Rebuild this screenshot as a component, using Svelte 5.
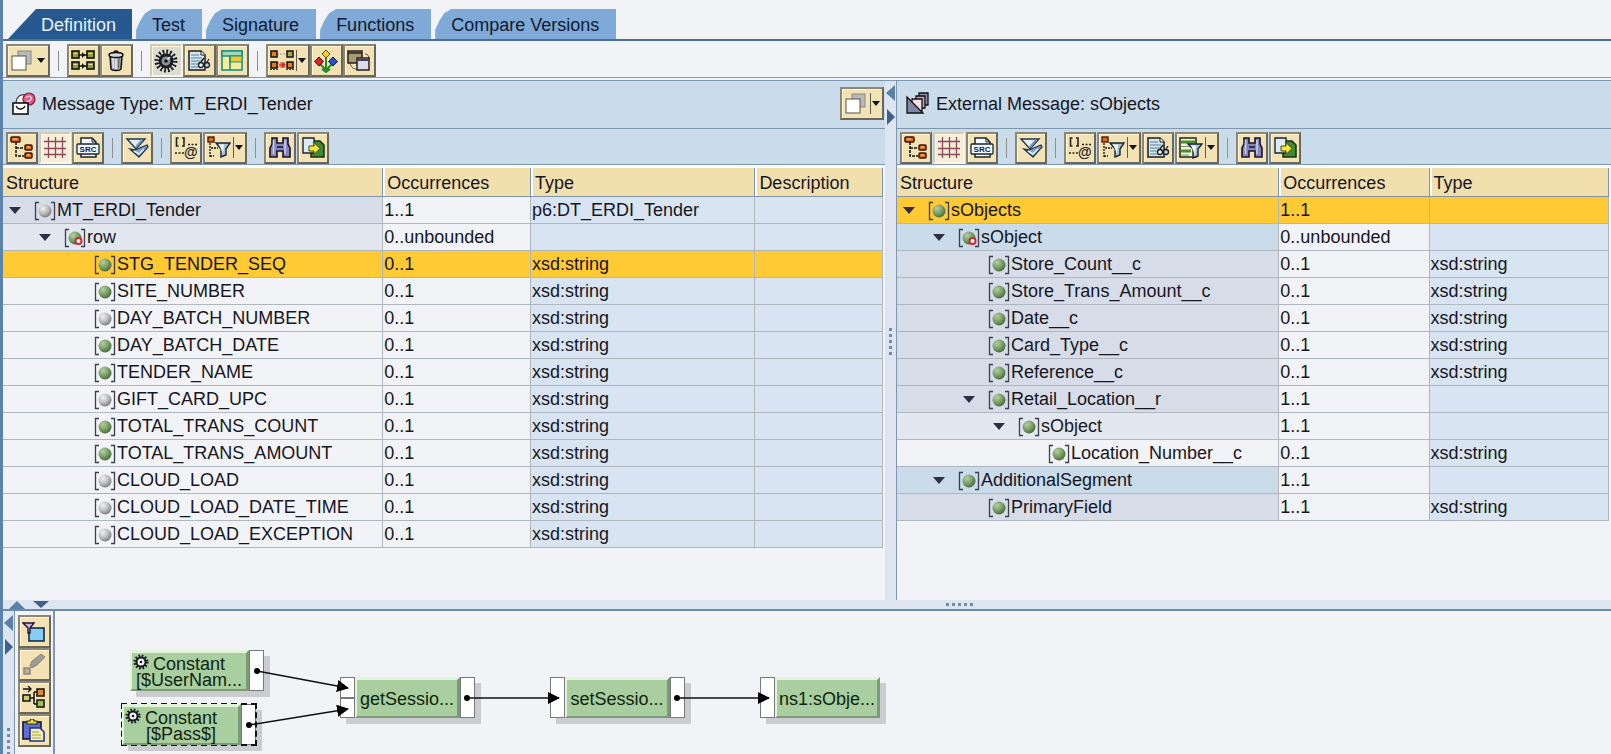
<script>
  const tabs = ['Definition', 'Test', 'Signature', 'Functions', 'Compare Versions'];
  let activeTab = $state('Definition');

  const mainTools = [
    { icon: 'copy', label: 'Object', menu: true },
    null,
    { icon: 'map', label: 'Show mapping' },
    { icon: 'trash', label: 'Delete' },
    null,
    { icon: 'gear', label: 'Parameters', pressed: true },
    { icon: 'docview', label: 'Documentation' },
    { icon: 'layout', label: 'Layout' },
    null,
    { icon: 'mapred', label: 'Map fields', menu: true, bar: true },
    { icon: 'diamonds', label: 'Dependencies' },
    { icon: 'windows', label: 'Windows' }
  ];
  const viewTools = [
    { icon: 'tree', label: 'Tree' },
    { icon: 'grid', label: 'Table', pressed: true },
    { icon: 'src', label: 'Source' },
    null,
    { icon: 'expand', label: 'Expand' },
    null,
    { icon: 'attrs', label: 'Attributes' },
    { icon: 'treefilter', label: 'Filter tree', menu: true, bar: true }
  ];
  const findTools = [null, { icon: 'find', label: 'Find' }, { icon: 'export', label: 'Export' }];
  const leftTools = [...viewTools, ...findTools];
  const rightTools = [
    ...viewTools,
    { icon: 'docview', label: 'Documentation' },
    { icon: 'sheetfilter', label: 'Filter', menu: true, bar: true },
    ...findTools
  ];
  const sideTools = [
    { icon: 'filterwin', label: 'Filter window' },
    { icon: 'brush', label: 'Clear' },
    { icon: 'arrange', label: 'Arrange' },
    { icon: 'paste', label: 'Paste' }
  ];

  const leaf = (name, ball = 'green', extra = {}) => ({
    depth: 2, name, ball, occ: '0..1', type: 'xsd:string', tone: 'plain', ...extra
  });
  const source = [
    { depth: 0, name: 'MT_ERDI_Tender', ball: 'grey', open: true, occ: '1..1', type: 'p6:DT_ERDI_Tender', tone: 'mid' },
    { depth: 1, name: 'row', ball: 'green', multi: true, open: true, occ: '0..unbounded', type: '', tone: 'soft' },
    leaf('STG_TENDER_SEQ', 'green', { selected: true }),
    leaf('SITE_NUMBER'),
    leaf('DAY_BATCH_NUMBER', 'grey'),
    leaf('DAY_BATCH_DATE'),
    leaf('TENDER_NAME'),
    leaf('GIFT_CARD_UPC', 'grey'),
    leaf('TOTAL_TRANS_COUNT'),
    leaf('TOTAL_TRANS_AMOUNT'),
    leaf('CLOUD_LOAD', 'grey'),
    leaf('CLOUD_LOAD_DATE_TIME', 'grey'),
    leaf('CLOUD_LOAD_EXCEPTION', 'grey')
  ];
  const mid = { tone: 'mid' };
  const target = [
    { depth: 0, name: 'sObjects', ball: 'green', open: true, occ: '1..1', type: '', selected: true },
    { depth: 1, name: 'sObject', ball: 'green', multi: true, open: true, occ: '0..unbounded', type: '', tone: 'blue' },
    leaf('Store_Count__c', 'green', mid),
    leaf('Store_Trans_Amount__c', 'green', mid),
    leaf('Date__c', 'green', mid),
    leaf('Card_Type__c', 'green', mid),
    leaf('Reference__c', 'green', mid),
    { depth: 2, name: 'Retail_Location__r', ball: 'green', open: true, occ: '1..1', type: '', tone: 'mid' },
    { depth: 3, name: 'sObject', ball: 'green', open: true, occ: '1..1', type: '', tone: 'soft' },
    leaf('Location_Number__c', 'green', { depth: 4 }),
    { depth: 1, name: 'AdditionalSegment', ball: 'green', open: true, occ: '1..1', type: '', tone: 'blue' },
    leaf('PrimaryField', 'green', { tone: 'mid', occ: '1..1' })
  ];

  const nodes = [
    { x: 75, y: 39, lines: ['Constant', '[$UserNam...'], gear: true, ins: 0, out: true },
    { x: 67, y: 93, lines: ['Constant', '[$Pass$]'], gear: true, ins: 0, out: true, selected: true },
    { x: 285, y: 66, lines: ['getSessio...'], ins: 2, out: true },
    { x: 495, y: 66, lines: ['setSessio...'], ins: 1, out: true },
    { x: 705, y: 66, lines: ['ns1:sObje...'], ins: 1, out: false }
  ];
  const edges = [
    [202, 60, 293, 77],
    [194, 114, 293, 98],
    [412, 87, 504, 87],
    [622, 87, 714, 87]
  ];
</script>

{#snippet icon(name)}
  <svg class="icon" viewBox="0 0 24 24" width="24" height="24" aria-hidden="true">
    {#if name === 'copy'}
      <rect x="8" y="2" width="13" height="13" fill="#b9b9b6" stroke="#8a8981" />
      <rect x="2" y="7" width="14" height="14" fill="#fff" stroke="#55534c" />
    {:else if name === 'map'}
      <path d="M8 6h8M8 17h8" stroke="#111" stroke-width="1.6" />
      <path d="M11 3l3 3-3 3zM11 14l3 3-3 3z" fill="#111" />
      <g fill="#94a036" stroke="#111" stroke-width="1.6">
        <rect x="1" y="2" width="7" height="7" /><rect x="16" y="2" width="7" height="7" />
        <rect x="1" y="13" width="7" height="7" /><rect x="16" y="13" width="7" height="7" />
      </g>
      <path d="M2.5 4.500h4M17.500 4.500h4M2.500 15.500h4M17.500 15.500h4" stroke="#dfe39a" />
    {:else if name === 'trash'}
      <path d="M6 7h12l-1 13c-1 2-9 2-10 0z" fill="#a9a9b8" stroke="#111" stroke-width="1.500" />
      <path d="M9 9l.5 10M12 9v11" stroke="#eee" stroke-width="1.500" /><path d="M15 9l-.5 10" stroke="#555" />
      <ellipse cx="12" cy="6" rx="7" ry="2.500" fill="#d9d9e2" stroke="#111" stroke-width="1.500" />
      <path d="M10 3.500c0-2 4-2 4 0" fill="none" stroke="#111" stroke-width="1.500" />
    {:else if name === 'gear'}
      <circle cx="12" cy="12" r="9" fill="none" stroke="#1a1c22" stroke-width="5" stroke-dasharray="1.700 1.834" />
      <circle cx="12" cy="12" r="6" fill="#8f9299" stroke="#1a1c22" stroke-width="3" />
      <path d="M12 12l4-4" stroke="#eee" stroke-width="1.500" /><circle cx="12" cy="12" r="1.800" fill="#111" />
    {:else if name === 'docview'}
      <path d="M2 2h12l4 4v15H2z" fill="#d3e6ef" stroke="#1a1c22" stroke-width="1.500" />
      <path d="M14 2v4h4" fill="#fff" stroke="#1a1c22" />
      <path d="M4 6h8M4 9h11M4 12h11M4 15h9M4 18h9" stroke="#5b8092" />
      <circle cx="14" cy="16" r="2.500" fill="#e9f4f8" stroke="#1a1c22" stroke-width="1.300" />
      <circle cx="20" cy="16" r="2.500" fill="#b9d2dc" stroke="#1a1c22" stroke-width="1.300" />
      <path d="M14 13l3-4M20 13l2-3" fill="none" stroke="#1a1c22" stroke-width="1.300" />
    {:else if name === 'layout'}
      <rect x="2" y="2" width="20" height="19" fill="#f7ee9b" stroke="#1d8f7f" stroke-width="1.600" />
      <path d="M2 2h20v5H2z" fill="#a6d8bd" stroke="#1d8f7f" stroke-width="1.600" />
      <rect x="10" y="7" width="12" height="6" fill="#f2c42e" stroke="#1d8f7f" />
      <path d="M10 7v14" stroke="#1d8f7f" stroke-width="1.600" />
    {:else if name === 'mapred'}
      <path d="M7 5h9" stroke="#999" stroke-dasharray="2 1" />
      <path d="M7 14h9M7 18h9" stroke="#d3271c" stroke-dasharray="2 1" />
      <path d="M9 16h5" stroke="#d3271c" stroke-width="1.500" /><path d="M12 13l4 3-4 3z" fill="#d3271c" />
      <g stroke="#111" stroke-width="1.500">
        <rect x="1" y="2" width="6" height="6" fill="#e07b26" /><rect x="17" y="2" width="6" height="6" fill="#a9a54c" />
        <rect x="1" y="13" width="6" height="6" fill="#e07b26" /><rect x="17" y="13" width="6" height="6" fill="#e07b26" />
      </g>
      <path d="M0 20.500h8M16 20.500h8" stroke="#9c1d14" stroke-dasharray="2 1" />
    {:else if name === 'diamonds'}
      <path d="M12 8v13M12 21l-6-6M12 21l6-6M8 20l4 3 4-3" fill="none" stroke="#228a2c" stroke-width="2" />
      <path d="M12 1l4 4-4 4-4-4z" fill="#f4d02a" stroke="#55501a" />
      <path d="M5 8l4.500 4.500L5 17 .500 12.500z" fill="#d8232a" stroke="#4a1010" />
      <path d="M19 8l4.500 4.500L19 17l-4.500-4.500z" fill="#2a50c8" stroke="#101c4a" />
    {:else if name === 'windows'}
      <path d="M3 12c0 6 3 8 7 8" fill="none" stroke="#555" />
      <path d="M18 5c3 0 4 2 4 5" fill="none" stroke="#555" />
      <rect x="1" y="2" width="14" height="12" fill="#a79a70" stroke="#222" stroke-width="1.500" />
      <path d="M1 4h14" stroke="#222" stroke-width="1.500" />
      <rect x="10" y="9" width="12" height="12" fill="#dcdce8" stroke="#222" stroke-width="1.500" />
      <path d="M10 11h12" stroke="#44405e" stroke-width="2" />
    {:else if name === 'tree'}
      <path d="M6 6v14h8M6 12h8" fill="none" stroke="#111" stroke-width="1.500" stroke-dasharray="3 1" />
      <g fill="#d9701f" stroke="#3a1204" stroke-width="1.500">
        <rect x="1" y="1" width="9" height="5" rx="1" /><rect x="15" y="9" width="7" height="5" rx="1" />
        <rect x="15" y="17" width="7" height="5" rx="1" />
      </g>
      <path d="M17 11h3M17 19h3M3 3h4" stroke="#ffd08a" />
    {:else if name === 'grid'}
      <path d="M5.500 1v21M12.500 1v21M19.500 1v21M1 5.500h22M1 12.500h22M1 18.500h22" stroke="#8a4a5c" stroke-width="1.300" />
    {:else if name === 'src'}
      <path d="M5 9V2h11l4 4v3M5 17v4h15v-4" fill="#f4f8fb" stroke="#1a2433" stroke-width="1.500" />
      <path d="M16 2v4h4" fill="none" stroke="#1a2433" />
      <rect x="1" y="8" width="22" height="10" rx="1" fill="#f4fbff" stroke="#1a2433" stroke-width="1.300" />
      <text x="12" y="16" text-anchor="middle" font-size="8" font-weight="700" fill="#11203a">SRC</text>
    {:else if name === 'expand'}
      <path d="M10 14l12-5 1 2-9 10-9-8z" fill="#7fa3cc" stroke="#1f3550" stroke-width="1.300" />
      <path d="M9 15l5 3 5-5" fill="none" stroke="#e6f0f8" stroke-width="1.500" />
      <path d="M2 3h18l-9 10z" fill="#e4eef6" stroke="#1f3550" stroke-width="1.400" />
      <path d="M11 11l6-7" stroke="#6f94bd" stroke-width="2" />
    {:else if name === 'attrs'}
      <path d="M4.500 2H2.500v8h2M8 2h2v8H8" fill="none" stroke="#222" stroke-width="1.600" />
      <path d="M14 8.500h9M1 17h9" stroke="#222" stroke-width="1.500" stroke-dasharray="2 1.500" />
      <text x="10" y="21" font-size="14" font-weight="700" fill="#222">@</text>
    {:else if name === 'treefilter'}
      <path d="M3 7v14M4 12h7M3 20h4" fill="none" stroke="#111" stroke-width="1.300" stroke-dasharray="2 1" />
      <rect x="1" y="1" width="6" height="5" fill="#d9701f" stroke="#3a1204" stroke-width="1.300" />
      <path d="M9 7h14l-4 6v6l-5 2v-8z" fill="#a9bfd0" stroke="#1a2433" stroke-width="1.400" />
      <path d="M12 8.500h5l-1 9z" fill="#eef6fb" />
    {:else if name === 'sheetfilter'}
      <rect x="1" y="2" width="16" height="19" fill="#f2f6d8" stroke="#1a2a1a" stroke-width="1.500" />
      <path d="M2 6h14M2 15h10" stroke="#4c8a2c" stroke-width="3" /><path d="M2 10.500h9M2 19h8" stroke="#7c8a6c" />
      <path d="M9 8h14l-4 5v7l-5 2v-9z" fill="#a9bfd0" stroke="#1a2433" stroke-width="1.400" />
      <path d="M12 9.500h5l-1 9z" fill="#eef6fb" />
    {:else if name === 'find'}
      <path d="M4 2h5v5h6V2h5v6l2 4v9h-7v-6H9v6H2v-9l2-4z" fill="#8485b8" stroke="#15152c" stroke-width="1.600" />
      <path d="M5.500 4v14M17 4v14" stroke="#d0d0ee" stroke-width="1.500" /><path d="M9 11h6" stroke="#15152c" stroke-width="1.500" />
    {:else if name === 'export'}
      <path d="M12 5h7l4 4v12H10V9z" fill="#3c8a34" stroke="#14300f" stroke-width="1.500" />
      <path d="M2 2h11v15H2z" fill="#dceaf4" stroke="#1a2433" stroke-width="1.400" />
      <path d="M8 10h5V6.500l6 6-6 6V15H8z" fill="#f3e640" stroke="#4a4a10" />
    {:else if name === 'filterwin'}
      <rect x="7" y="8" width="15" height="13" fill="#86cdf3" stroke="#152a4a" stroke-width="1.600" />
      <path d="M1 3h11L8 8v5H6V8z" fill="#c9b4e0" stroke="#1a1433" stroke-width="1.400" />
    {:else if name === 'brush'}
      <rect x="2" y="15" width="6" height="6" fill="#b5b0a0" stroke="#87836f" stroke-width="1.400" />
      <path d="M8 13l2-5 9-7 4 3-8 8-5 3z" fill="#9d9b94" stroke="#8d8a7c" />
    {:else if name === 'arrange'}
      <path d="M1 3h8M6 0l3 3-3 3" fill="none" stroke="#111" stroke-width="1.400" />
      <path d="M8 12h4M12 6v12M12 6h3M12 18h3" fill="none" stroke="#111" stroke-width="1.500" />
      <g stroke="#111" stroke-width="1.500">
        <rect x="1" y="9" width="7" height="6" fill="#c3cf6a" /><rect x="15" y="3" width="7" height="7" fill="#e08c2c" />
        <rect x="15" y="14" width="7" height="7" fill="#9cc24c" />
      </g>
    {:else if name === 'paste'}
      <rect x="1" y="3" width="18" height="17" fill="#5d6fd0" stroke="#14183c" stroke-width="1.600" />
      <path d="M5 5V2h3c0-3 4-3 4 0h3v3z" fill="#e9df3c" stroke="#35330c" stroke-width="1.200" />
      <path d="M8 9h10l4 4v9H8z" fill="#eef0c0" stroke="#2a2f86" stroke-width="1.600" />
      <path d="M10 13h7M10 16h9M10 19h9" stroke="#a8a52e" />
    {:else if name === 'message'}
      <path d="M4 10c1-6 5-8 9-7l3 8" fill="#f6eef2" stroke="#222" stroke-width="1.200" />
      <circle cx="17" cy="7" r="6" fill="#dc5a86" stroke="#7c1c40" stroke-width="1.200" />
      <path d="M14 6c2-3 6-2 5 1s-4 3-4 1" fill="none" stroke="#f8c4d6" stroke-width="1.500" />
      <rect x="1" y="11" width="15" height="11" fill="#fff" stroke="#111" stroke-width="1.600" />
      <path d="M4 14c2 4 7 4 9 0" fill="none" stroke="#111" stroke-width="1.300" />
    {:else if name === 'external'}
      <path d="M13 1h9v12h-9z" fill="#8f90a8" stroke="#111" stroke-width="1.300" />
      <path d="M10 4h9v12h-9z" fill="#b9a8bd" stroke="#111" stroke-width="1.300" />
      <path d="M6 7h10v12H6z" fill="#f6dfe6" stroke="#111" stroke-width="1.300" />
      <path d="M1 5l16 16H1z" fill="#8087a4" stroke="#111" stroke-width="1.300" />
    {/if}
  </svg>
{/snippet}

{#snippet toolbar(items)}
  {#each items as tool}
    {#if tool}
      <button class="tool" class:pressed={tool.pressed} class:menu={tool.menu} aria-label={tool.label}>
        {@render icon(tool.icon)}
        {#if tool.menu}<span class="caret" class:bar={tool.bar}></span>{/if}
      </button>
    {:else}
      <span class="sep"></span>
    {/if}
  {/each}
{/snippet}

{#snippet structure(rows, columns)}
  <table class:wide={columns.length === 4}>
    <colgroup>{#each columns as c}<col class={c.toLowerCase()} />{/each}</colgroup>
    <thead>
      <tr>{#each columns as c}<th scope="col">{c}</th>{/each}</tr>
    </thead>
    <tbody>
      {#each rows as row}
        <tr class:selected={row.selected}>
          <td class="name {row.tone}">
            <div class="entry" style="padding-left: {6 + row.depth * 30}px">
              <span class="toggle" class:open={row.open}></span>
              <svg viewBox="0 0 22 20" width="22" height="20" aria-hidden="true">
                <path d="M5 1.500H1.500v17H5M17 1.500h3.500v17H17" fill="none" stroke="#3a3f52" stroke-width="1.300" />
                <circle cx="11" cy="10" r="6.500" fill="url(#ball-{row.ball})" />
                {#if row.multi}<circle cx="14.500" cy="13" r="3" fill="#fff" stroke="#cc2a30" stroke-width="2" />{/if}
              </svg>
              <span>{row.name}</span>
            </div>
          </td>
          <td class="occ">{row.occ}</td>
          <td>{row.type}</td>
          {#if columns.length === 4}<td></td>{/if}
        </tr>
      {/each}
    </tbody>
  </table>
{/snippet}

<svg class="defs" width="0" height="0" aria-hidden="true">
  <defs>
    <radialGradient id="ball-green" cx="0.350" cy="0.300" r="0.800">
      <stop offset="0" stop-color="#b5cfa4" /><stop offset="0.500" stop-color="#7ba067" /><stop offset="1" stop-color="#3f5f35" />
    </radialGradient>
    <radialGradient id="ball-grey" cx="0.350" cy="0.300" r="0.800">
      <stop offset="0" stop-color="#f2f2f2" /><stop offset="0.500" stop-color="#bdbdbf" /><stop offset="1" stop-color="#707074" />
    </radialGradient>
  </defs>
</svg>

<div class="app">
  <div class="tabs" role="tablist">
    {#each tabs as tab}
      <button class="tab" role="tab" aria-selected={tab === activeTab} class:active={tab === activeTab} onclick={() => (activeTab = tab)}>{tab}</button>
    {/each}
  </div>

  <div class="bar main">{@render toolbar(mainTools)}</div>

  <div class="split">
    <section class="panel source">
      <header>
        {@render icon('message')}
        <h2>Message Type: MT_ERDI_Tender</h2>
        <button class="tool menu" aria-label="Object">{@render icon('copy')}<span class="caret bar"></span></button>
      </header>
      <div class="bar view">{@render toolbar(leftTools)}</div>
      {@render structure(source, ['Structure', 'Occurrences', 'Type', 'Description'])}
    </section>
    <div class="vsplit">
      <i class="arrow left"></i><i class="arrow right"></i><i class="grip"></i>
    </div>
    <section class="panel target">
      <header>
        {@render icon('external')}
        <h2>External Message: sObjects</h2>
      </header>
      <div class="bar view">{@render toolbar(rightTools)}</div>
      {@render structure(target, ['Structure', 'Occurrences', 'Type'])}
    </section>
  </div>

  <div class="hsplit">
    <i class="arrow up"></i><i class="arrow down"></i><i class="grip"></i>
  </div>

  <div class="editor">
    <div class="vsplit">
      <i class="arrow left"></i><i class="arrow right"></i><i class="grip"></i>
    </div>
    <div class="side">{@render toolbar(sideTools)}</div>
    <div class="canvas">
      {#each nodes as node}
        <div class="node" class:selected={node.selected} style="left: {node.x}px; top: {node.y}px">
          {#if node.ins}
            <div class="ports">{#each Array(node.ins) as _}<span></span>{/each}</div>
          {/if}
          <div class="body">
            {#if node.gear}
              <svg class="cog" viewBox="0 0 16 16" width="16" height="16" aria-hidden="true">
                <circle cx="8" cy="8" r="6.300" fill="none" stroke="#14181c" stroke-width="2.500" stroke-dasharray="1.600 1.699" />
                <circle cx="8" cy="8" r="4.500" fill="#f3f6f3" stroke="#14181c" stroke-width="2" />
                <circle cx="8" cy="8" r="1.300" fill="#14181c" />
              </svg>
            {/if}
            {#each node.lines as line}<span>{line}</span>{/each}
          </div>
          {#if node.out}<div class="ports"><span></span></div>{/if}
        </div>
      {/each}
      <svg class="edges" aria-hidden="true">
        <defs>
          <marker id="tip" viewBox="0 0 12 12" refX="11" refY="6" markerWidth="12" markerHeight="12" markerUnits="userSpaceOnUse" orient="auto">
            <path d="M0 0l12 6-12 6z" fill="#000" />
          </marker>
        </defs>
        {#each edges as [x1, y1, x2, y2]}
          <line {x1} {y1} {x2} {y2} stroke="#111" stroke-width="1.500" marker-end="url(#tip)" />
          <circle cx={x1} cy={y1} r="3" />
        {/each}
      </svg>
    </div>
  </div>
</div>

<style>
  :global(body) {
    margin: 0;
    background: #f2f3f6;
  }
  .app {
    box-sizing: border-box;
    min-height: 100vh;
    display: flex;
    flex-direction: column;
    border-left: 3px solid #5c83ab;
    background: #f2f3f6;
    color: #16161f;
    font: 18px/26px "Liberation Sans", Arial, sans-serif;
  }
  .defs {
    position: absolute;
  }
  button {
    font: inherit;
    color: inherit;
    margin: 0;
  }
  .icon {
    display: block;
    flex: none;
  }

  .tabs {
    display: flex;
    gap: 4px;
    padding: 9px 0 0 5px;
    border-bottom: 2px solid #4b6f94;
  }
  .tab {
    height: 30px;
    border: 0;
    padding: 2px 17px 0 16px;
    background: #7fa9d6;
    color: #0e1a33;
    clip-path: polygon(0 100%, 0 70%, 4px 40%, 9px 14%, 16px 0, 100% 0, 100% 100%);
  }
  .tab.active {
    padding: 2px 16px 0 33px;
    background: #25598f;
    color: #e9f1fa;
    clip-path: polygon(0 100%, 28px 0, 100% 0, 100% 100%);
  }

  .bar {
    display: flex;
    align-items: center;
    padding: 3px 3px 0;
  }
  .tool {
    box-sizing: border-box;
    width: 33px;
    height: 33px;
    padding: 0 0 0 2px;
    display: flex;
    align-items: center;
    border: 2px solid;
    border-color: #8b8675 #69665c #69665c #8b8675;
    background: #f3e2b4;
    box-shadow: inset 1px 1px #fff6d6;
  }
  .tool.menu {
    width: 44px;
  }
  .tool.pressed {
    border-color: #cfcbbc #fbf6e4 #fbf6e4 #cfcbbc;
    background: #f8edd8;
  }
  .main .tool.pressed {
    background: #dcdcd2;
  }
  .caret {
    display: flex;
    align-items: center;
    height: 21px;
    padding-left: 3px;
  }
  .caret.bar {
    margin-left: 2px;
    padding: 0 0 0 1px;
    border-left: 1px solid #5d5a4e;
  }
  .caret::after {
    content: "";
    border: 4px solid transparent;
    border-top: 5px solid #111;
    border-bottom: 0;
  }
  .sep {
    width: 1px;
    height: 20px;
    margin: 0 8px;
    background: #8b8f94;
  }

  .split {
    flex: 1;
    display: flex;
    border-top: 4px double #7d97b0;
  }
  .panel {
    min-width: 0;
    display: flex;
    flex-direction: column;
  }
  .source {
    flex: 882 1 0;
  }
  .target {
    flex: 714 1 0;
    border-left: 1px solid #7d97b0;
  }
  header {
    box-sizing: border-box;
    display: flex;
    align-items: center;
    gap: 6px;
    height: 48px;
    padding: 0 1px 2px 9px;
    background: #cadbea;
    border-bottom: 1px solid #7d97b0;
  }
  h2 {
    flex: 1;
    margin: 0;
    font-size: 18px;
    font-weight: 400;
  }
  .view {
    height: 33px;
    gap: 1px;
    padding-top: 2px;
    background: #cadbea;
    border-bottom: 1px solid #7d97b0;
  }
  .view .tool:not(.menu) {
    width: 32px;
  }
  .view .tool {
    height: 32px;
  }
  .view .sep {
    margin: 0 7px;
  }
  table {
    width: calc(100% - 2px);
    border-top: 3px solid #fbfcfd;
    border-collapse: separate;
    border-spacing: 0;
    table-layout: fixed;
  }
  .structure { width: 53.700%; }
  .occurrences { width: 21.100%; }
  .wide .structure { width: 43.200%; }
  .wide .occurrences { width: 16.800%; }
  .wide .type { width: 25.500%; }
  th {
    box-sizing: border-box;
    height: 28px;
    padding: 2px 3px 0;
    background: #f1dfae;
    border-right: 1px solid #7f96a8;
    border-bottom: 1px solid #7f96a8;
    text-align: left;
    font-weight: 400;
  }
  th + th {
    padding-left: 4px;
    box-shadow: inset 2px 0 #fbfcfd;
  }
  td {
    box-sizing: border-box;
    height: 27px;
    padding: 1px 0 0 1px;
    line-height: 25px;
    background: #d8e4f2;
    border-right: 1px solid #aeb6be;
    border-bottom: 1px solid #aeb6be;
    white-space: nowrap;
  }
  td.name { padding: 1px 0 0; }
  td.occ, td.plain { background: #f2f3f6; }
  td.soft { background: #e3e7ef; }
  td.mid { background: #d7dde8; }
  td.blue { background: #cadbea; }
  tr.selected td { background: #ffca33; }
  .entry {
    display: flex;
    align-items: center;
  }
  .entry svg {
    flex: none;
    margin-right: 1px;
  }
  .toggle {
    flex: none;
    width: 14px;
    margin-right: 11px;
  }
  .toggle.open::before {
    content: "";
    display: block;
    width: 0;
    border: 6px solid transparent;
    border-top: 7px solid #2b3047;
    border-bottom: 0;
  }

  .vsplit {
    flex: none;
    width: 11px;
    display: flex;
    flex-direction: column;
    align-items: center;
    background: #dde5f0;
  }
  .arrow {
    flex: none;
    border: 8px solid transparent;
  }
  .arrow.left {
    margin-top: 4px;
    border-right: 9px solid #5c7fa5;
    border-left: 0;
  }
  .arrow.right {
    margin-top: 8px;
    border-left: 8px solid #41618a;
    border-right: 0;
  }
  .grip {
    flex: none;
    width: 3px;
    height: 27px;
    margin-top: 203px;
    background: repeating-linear-gradient(#6d8cb0 0 3px, transparent 3px 6px);
  }
  .hsplit {
    display: flex;
    align-items: center;
    height: 9px;
    padding-left: 6px;
    background: #dde5f0;
    border-bottom: 2px solid #6a8aab;
  }
  .arrow.up {
    border-bottom: 8px solid #5c7fa5;
    border-top: 0;
  }
  .arrow.down {
    margin-left: 8px;
    border-top: 7px solid #41618a;
    border-bottom: 0;
  }
  .hsplit .grip {
    width: 27px;
    height: 3px;
    margin: 0 0 0 56%;
    background: repeating-linear-gradient(90deg, #6d8cb0 0 3px, transparent 3px 6px);
  }

  .editor {
    flex: none;
    display: flex;
    height: 143px;
    overflow: hidden;
  }
  .editor .grip {
    margin-top: 73px;
  }
  .side {
    flex: none;
    width: 33px;
    padding: 4px 2px 0 3px;
    display: flex;
    flex-direction: column;
    border: solid #7d97b0;
    border-width: 0 2px 0 1px;
  }
  .canvas {
    position: relative;
    flex: 1;
  }
  .edges {
    position: absolute;
    inset: 0;
    width: 100%;
    height: 100%;
  }
  .node {
    position: absolute;
    display: flex;
    height: 41px;
    box-shadow: 6px 6px #cbccd0;
  }
  .node.selected {
    outline: 2px dashed #111;
    outline-offset: -1px;
  }
  .body {
    box-sizing: border-box;
    position: relative;
    width: 105px;
    padding-top: 2px;
    display: flex;
    flex-direction: column;
    justify-content: center;
    align-items: center;
    border: solid;
    border-width: 3px 3px 2px 2px;
    border-color: #e3f5da #7b9a76 #7b9a76 #e3f5da;
    background: #a9cea0;
    line-height: 16px;
    color: #10240f;
  }
  .body:first-child {
    width: 119px;
  }
  .cog {
    position: absolute;
    left: 1px;
    top: 1px;
  }
  .ports {
    width: 15px;
    display: flex;
    flex-direction: column;
  }
  .ports span {
    flex: 1;
    border: 1px solid #77797c;
    background: #fff;
  }
</style>
